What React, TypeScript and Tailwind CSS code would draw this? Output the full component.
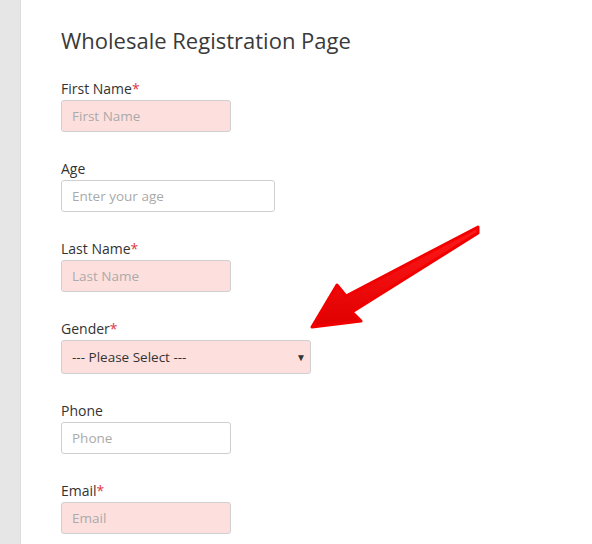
import React from "react";

type Field = {
  label: string;
  placeholder?: string;
  required?: boolean;
  width: string;
  select?: boolean;
};

const fields: Field[] = [
  { label: "First Name", placeholder: "First Name", required: true, width: "w-[170px]" },
  { label: "Age", placeholder: "Enter your age", width: "w-[214px]" },
  { label: "Last Name", placeholder: "Last Name", required: true, width: "w-[170px]" },
  { label: "Gender", required: true, width: "w-[250px]", select: true },
  { label: "Phone", placeholder: "Phone", width: "w-[170px]" },
  { label: "Email", placeholder: "Email", required: true, width: "w-[170px]" },
];

function Arrow() {
  return (
    <svg
      className="pointer-events-none absolute left-0 top-0"
      width="592"
      height="544"
      viewBox="0 0 592 544"
    >
      <defs>
        <linearGradient id="ar" x1="0" y1="0" x2="0" y2="1">
          <stop offset="0" stopColor="#ff1a1a" />
          <stop offset="1" stopColor="#e00000" />
        </linearGradient>
      </defs>
      <polygon
        points="478,227 346,296 337,285 312,327 361,321 352,312 478,233"
        fill="url(#ar)"
        stroke="#f20000"
        strokeWidth="3"
        strokeLinejoin="round"
      />
    </svg>
  );
}

export default function App() {
  return (
    <div className="relative flex h-[544px] w-[592px] overflow-hidden bg-white font-['Open_Sans',sans-serif]">
      <div className="w-[21px] shrink-0 border-r border-[#dcdcdc] bg-[#e6e6e6]" />
      <div className="flex-1 pl-[40px] pt-[25px]">
        <h1 className="text-[22px] leading-[30px] text-[#3a3a3a]">
          Wholesale Registration Page
        </h1>
        <div className="mt-[24px] flex flex-col gap-[27px]">
          {fields.map((f) => (
            <div key={f.label} className="flex flex-col">
              <label className="text-[14px] leading-[20px] text-[#333]">
                {f.label}
                {f.required && <span className="text-[#e0374a]">*</span>}
              </label>
              {f.select ? (
                <div
                  className={`mt-[1px] flex h-[34px] ${f.width} items-center justify-between rounded-[3px] border border-[#cfcfcf] bg-[#fde0de] pl-[10px] pr-[4px] text-[13.5px] text-[#333]`}
                >
                  <span>--- Please Select ---</span>
                  <span className="text-[10px]">▼</span>
                </div>
              ) : (
                <input
                  placeholder={f.placeholder}
                  className={`mt-[1px] h-[32px] ${f.width} rounded-[3px] border border-[#cfcfcf] px-[10px] text-[13.5px] outline-none placeholder:text-[#aaa] ${
                    f.required ? "bg-[#fde0de]" : "bg-white"
                  }`}
                />
              )}
            </div>
          ))}
        </div>
      </div>
      <Arrow />
    </div>
  );
}
